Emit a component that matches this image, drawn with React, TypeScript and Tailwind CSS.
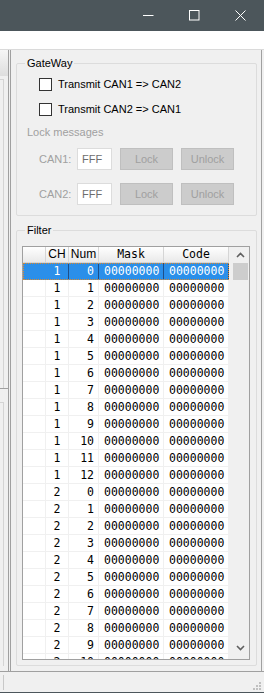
import React from "react";

interface FilterRow {
  ch: number;
  num: number;
}

const rows: FilterRow[] = [
  ...Array.from({ length: 13 }, (_, i) => ({ ch: 1, num: i })),
  ...Array.from({ length: 11 }, (_, i) => ({ ch: 2, num: i })),
];

const ui = { fontFamily: '"Liberation Sans", Arial, sans-serif' };
const mono = { fontFamily: '"DejaVu Sans Mono", "Liberation Mono", monospace' };

const TitleBar: React.FC = () => (
  <div className="h-[31px] bg-[#4c565b] flex items-center shrink-0">
    <div className="flex-1" />
    <svg width="11" height="11" viewBox="0 0 11 11" className="mr-[35px]">
      <path d="M0 5.5H10.5" stroke="#fff" strokeWidth="1" />
    </svg>
    <svg width="11" height="11" viewBox="0 0 11 11" className="mr-[35px]">
      <rect x="0.5" y="0.5" width="9.5" height="9.5" fill="none" stroke="#fff" strokeWidth="1" />
    </svg>
    <svg width="11" height="11" viewBox="0 0 11 11" className="mr-[18px]">
      <path d="M0.5 0.5L10.5 10.5M10.5 0.5L0.5 10.5" stroke="#fff" strokeWidth="1" />
    </svg>
  </div>
);

const Checkbox: React.FC<{ label: string }> = ({ label }) => (
  <div className="flex items-center h-[13px]">
    <div className="w-[13px] h-[13px] border border-[#333333] bg-white" />
    <span className="ml-[6px] text-[11px] text-black leading-[13px]">{label}</span>
  </div>
);

const LockRow: React.FC<{ name: string }> = ({ name }) => (
  <div className="flex items-center h-[22px] pl-[22px]">
    <span className="w-[38px] text-[11px] text-[#a0a0a0]">{name}</span>
    <div className="w-[35px] h-[22px] bg-white border border-[#dcdcdc] text-[11px] text-[#6d6d6d] pl-[4px] leading-[20px]">
      FFF
    </div>
    <div className="ml-[8px] w-[53px] h-[22px] bg-[#cccccc] border border-[#bfbfbf] text-[11px] text-[#a0a0a0] flex items-center justify-center">
      Lock
    </div>
    <div className="ml-[8px] w-[53px] h-[22px] bg-[#cccccc] border border-[#bfbfbf] text-[11px] text-[#a0a0a0] flex items-center justify-center">
      Unlock
    </div>
  </div>
);

const GridRow: React.FC<{ row: FilterRow; selected: boolean }> = ({ row, selected }) => {
  const line = selected ? "border-[#1d4f8a]" : "border-[#f0f0f0]";
  const text = selected ? "text-white" : "text-black";
  return (
    <div
      className={
        "flex h-[17px] shrink-0 border-b text-[11.5px] leading-[16px] " +
        (selected ? "bg-[#2b8fe9] border-[#2b8fe9] outline-1 outline-dotted outline-[#e08a2c] -outline-offset-1 " : "bg-white border-[#f0f0f0] ") +
        text
      }
      style={mono}
    >
      <div className={"w-[23px] border-r " + (selected ? "border-[#2b8fe9]" : "border-[#f0f0f0]")} />
      <div className={"w-[23px] border-r text-center " + line}>{row.ch}</div>
      <div className={"w-[30px] border-r text-right pr-[4px] " + line}>{row.num}</div>
      <div className={"w-[65px] border-r pl-[5px] " + line}>00000000</div>
      <div className={"w-[65px] border-r pl-[5px] " + line}>00000000</div>
    </div>
  );
};

const FilterGrid: React.FC = () => (
  <div className="ml-[5px] mr-[6px] mt-[9px] h-[414px] border border-[#a0a0a0] bg-white flex overflow-hidden">
    <div className="flex flex-col w-[206px] overflow-hidden">
      <div className="flex h-[16px] shrink-0 bg-linear-to-b from-[#ffffff] to-[#e9e9e9] border-b border-[#d5d5d5] text-[11.5px] leading-[15px] text-black">
        <div className="w-[23px] border-r border-[#d5d5d5]" />
        <div className="w-[23px] border-r border-[#d5d5d5] text-center text-[12px]" style={ui}>CH</div>
        <div className="w-[30px] border-r border-[#d5d5d5] text-center text-[12px]" style={ui}>Num</div>
        <div className="w-[65px] border-r border-[#d5d5d5] text-center" style={mono}>Mask</div>
        <div className="w-[65px] border-r border-[#d5d5d5] text-center" style={mono}>Code</div>
      </div>
      {rows.map((r, i) => (
        <GridRow key={i} row={r} selected={i === 0} />
      ))}
    </div>
    <div className="w-[20px] bg-[#f0f0f0] flex flex-col">
      <div className="h-[16px] flex items-center justify-center pl-[3px]">
        <svg width="9" height="6" viewBox="0 0 9 6">
          <path d="M1 5L4.5 1.5L8 5" fill="none" stroke="#606060" strokeWidth="1.6" />
        </svg>
      </div>
      <div className="h-[17px] ml-[4px] mr-[1px] bg-[#cdcdcd]" />
      <div className="flex-1" />
      <div className="h-[16px] flex items-center justify-center pl-[3px] mb-[3px]">
        <svg width="9" height="6" viewBox="0 0 9 6">
          <path d="M1 1L4.5 4.5L8 1" fill="none" stroke="#606060" strokeWidth="1.6" />
        </svg>
      </div>
    </div>
  </div>
);

const App: React.FC = () => {
  return (
    <div className="w-[264px] h-[693px] bg-[#f0f0f0] flex flex-col overflow-hidden text-black" style={ui}>
      <TitleBar />
      <div className="h-[18px] bg-white shrink-0" />
      <div className="h-px bg-[#dadada] shrink-0" />

      <div className="h-[621px] flex shrink-0">
        {/* left panel */}
        <div className="w-[8px] flex flex-col">
          <div className="h-[26px] bg-linear-to-b from-[#f6f6f6] to-[#dedede]" />
          <div className="h-[3px]" />
          <div className="h-[309px] w-[4px] border-t border-r border-[#d4d4d4]" />
          <div className="h-px bg-[#a0a0a0]" />
          <div className="h-[13px]" />
          <div className="h-[264px] w-[4px] border-t border-r border-[#d4d4d4]" />
        </div>
        {/* splitter */}
        <div className="w-[3px] border-l border-r border-[#a0a0a0]" />
        {/* right panel */}
        <div className="w-[251px] pl-[5px] pr-[4px] border-r border-[#a0a0a0] flex flex-col">
          <fieldset className="mt-[7px] w-[241px] border border-[#dcdcdc] rounded-[2px] pb-[10px]">
            <legend className="ml-[8px] px-[2px] text-[11px] leading-[13px]">GateWay</legend>
            <div className="flex flex-col">
              <div className="pl-[22px] mt-[8px]">
                <Checkbox label="Transmit CAN1 => CAN2" />
              </div>
              <div className="pl-[22px] mt-[12px]">
                <Checkbox label="Transmit CAN2 => CAN1" />
              </div>
              <div className="pl-[10px] mt-[10px] text-[11px] leading-[13px] text-[#a0a0a0]">Lock messages</div>
              <div className="mt-[9px]">
                <LockRow name="CAN1:" />
              </div>
              <div className="mt-[13px]">
                <LockRow name="CAN2:" />
              </div>
            </div>
          </fieldset>
          <fieldset className="mt-[8px] w-[241px] border border-[#dcdcdc] rounded-[2px] pb-[5px]">
            <legend className="ml-[8px] px-[2px] text-[11px] leading-[13px]">Filter</legend>
            <FilterGrid />
          </fieldset>
        </div>
        <div className="w-[2px]" />
      </div>

      {/* status bar */}
      <div className="h-px bg-[#a0a0a0] shrink-0" />
      <div className="h-[20px] flex items-center shrink-0">
        <div className="ml-[3px] w-px h-[15px] bg-[#c8c8c8]" />
        <div className="flex-1" />
        <svg width="10" height="10" viewBox="0 0 10 10" className="mr-[2px] mt-[8px]">
          <rect x="7" y="1" width="2" height="2" fill="#c0c0c0" />
          <rect x="4" y="4" width="2" height="2" fill="#c0c0c0" />
          <rect x="7" y="4" width="2" height="2" fill="#c0c0c0" />
          <rect x="1" y="7" width="2" height="2" fill="#c0c0c0" />
          <rect x="4" y="7" width="2" height="2" fill="#c0c0c0" />
          <rect x="7" y="7" width="2" height="2" fill="#c0c0c0" />
        </svg>
      </div>
      <div className="h-px bg-[#4c565b] shrink-0" />
    </div>
  );
};

export default App;
